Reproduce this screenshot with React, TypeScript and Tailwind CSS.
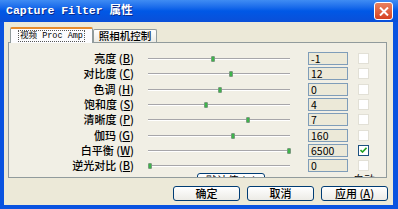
import React from 'react';

type Row = { label: string; key: string; value: string; thumb: number; checked?: boolean };

const ROWS: Row[] = [
  { label: '亮度', key: 'B', value: '-1', thumb: 213 },
  { label: '对比度', key: 'C', value: '12', thumb: 231 },
  { label: '色调', key: 'H', value: '0', thumb: 220 },
  { label: '饱和度', key: 'S', value: '4', thumb: 206 },
  { label: '清晰度', key: 'P', value: '7', thumb: 248 },
  { label: '伽玛', key: 'G', value: '160', thumb: 233 },
  { label: '白平衡', key: 'W', value: '6500', thumb: 289, checked: true },
  { label: '逆光对比', key: 'B', value: '0', thumb: 150 },
];

const TRACK_LEFT = 148;

function Slider({ thumb }: { thumb: number }) {
  return (
    <div className="relative w-[142px] h-full">
      <div className="absolute left-0 right-0 top-[6px] h-[1px] bg-[#A7A6AA]" />
      <div className="absolute left-0 right-0 top-[7px] h-[1px] bg-white" />
      <div
        className="absolute top-[4px] w-[4px] h-[6px] rounded-[1px] bg-[#3DB54A] border border-[#7A9A7E]"
        style={{ left: thumb - TRACK_LEFT - 2 }}
      />
    </div>
  );
}

function Check({ checked }: { checked?: boolean }) {
  return (
    <div
      className={
        checked
          ? 'w-[11px] h-[11px] bg-white border border-[#1C5180] flex items-center justify-center'
          : 'w-[11px] h-[11px] bg-white border border-[#E2E0D6]'
      }
    >
      {checked && (
        <svg width="7" height="6" viewBox="0 0 7 6">
          <path d="M0.5 3 L2.5 5 L6.5 0.8" stroke="#21A121" strokeWidth="1.6" fill="none" />
        </svg>
      )}
    </div>
  );
}

function XpButton({ children }: { children: React.ReactNode }) {
  return (
    <div className="h-[15px] w-[67px] rounded-[3px] border border-[#003C74] bg-gradient-to-b from-white to-[#ECEBE6] flex items-center justify-center text-[11px] font-medium text-black">
      {children}
    </div>
  );
}

export default function App() {
  const cjk = { fontFamily: '"Noto Sans CJK SC", "Noto Sans", sans-serif' };
  const mono = { fontFamily: '"Liberation Mono", "Noto Sans CJK SC", monospace' };

  return (
    <div className="w-[398px] h-[209px] bg-[#0A53E0] flex flex-col overflow-hidden" style={cjk}>
      {/* title bar */}
      <div className="h-[22px] flex items-center justify-between pl-[6px] pr-[5px] bg-gradient-to-b from-[#3F8CF3] via-[#0058E6] to-[#0A4FD8]">
        <span className="text-white font-bold text-[11.5px] leading-none [text-shadow:1px_1px_0_#0A2A8A]" style={mono}>
          Capture Filter 属性
        </span>
        <div className="w-[19px] h-[18px] rounded-[3px] border border-white bg-gradient-to-b from-[#E8805E] to-[#D6401F] flex items-center justify-center">
          <svg width="10" height="9" viewBox="0 0 10 9">
            <path d="M1 0.5 L9 8.5 M9 0.5 L1 8.5" stroke="white" strokeWidth="2" />
          </svg>
        </div>
      </div>

      {/* body */}
      <div className="ml-[4px] mr-[5px] mb-[4px] flex-1 bg-[#ECE9D8] flex flex-col">
        {/* tabs */}
        <div className="h-[20px] flex items-end pl-[6px] pt-[4px]">
          <div className="h-[16px] w-[83px] bg-[#FCFCFE] border border-[#919B9C] border-b-0 border-t-[#E68B2C] border-t-2 rounded-t-[2px] flex items-center justify-center text-black relative top-[1px]">
            <span className="border border-dotted border-[#555] px-[1px] text-[8.5px] leading-[10px] whitespace-nowrap" style={mono}>
              视频 Proc Amp
            </span>
          </div>
          <div className="h-[13px] w-[64px] bg-gradient-to-b from-white to-[#ECEBE5] border border-[#919B9C] border-b-0 rounded-t-[2px] flex items-center justify-center text-[10.5px] font-medium leading-none text-black">
            照相机控制
          </div>
        </div>

        {/* panel */}
        <div className="ml-[4px] w-[379px] h-[136px] border border-[#919B9C] bg-[#F1EFE5] overflow-hidden pt-[8px]">
          {ROWS.map((r, i) => (
            <div key={i} className="h-[15.3px] flex items-center">
              <div className="w-[125px] text-right text-[11px] font-medium leading-none text-black whitespace-nowrap">
                {r.label} (<u>{r.key}</u>)
              </div>
              <div className="ml-[14px] h-[13px]">
                <Slider thumb={r.thumb} />
              </div>
              <div className="ml-[18px] w-[40px] h-[13px] border border-[#7F9DB9] bg-[#ECE9D8] text-[10.5px] leading-[11px] pl-[2px] text-black">
                {r.value}
              </div>
              <div className="ml-[10px]">
                <Check checked={r.checked} />
              </div>
            </div>
          ))}
          {/* next row, mostly scrolled out of the panel */}
          <div className="h-[4px] overflow-hidden flex items-start">
            <div className="ml-[188px] w-[68px] h-[15px] rounded-[3px] border border-[#003C74] bg-white flex justify-center pt-[1px] text-[11px] leading-none text-black">
              默认值 (<u>D</u>)
            </div>
            <div className="ml-[88px] pt-[1px] text-[11px] leading-none text-black">自动</div>
          </div>
        </div>

        {/* buttons */}
        <div className="flex justify-end gap-[7px] pr-[5px] mt-[8px]">
          <XpButton>确定</XpButton>
          <XpButton>取消</XpButton>
          <XpButton>
            应用 (<u>A</u>)
          </XpButton>
        </div>
      </div>
    </div>
  );
}
